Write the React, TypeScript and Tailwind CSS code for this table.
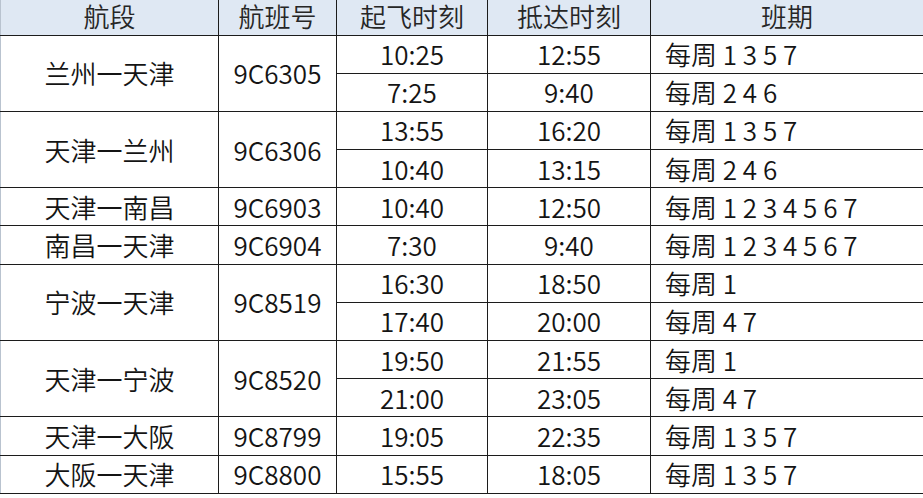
type Flight = {
  route: string;
  no: string;
  legs: { dep: string; arr: string; days: string }[];
};

const flights: Flight[] = [
  {
    route: "兰州一天津",
    no: "9C6305",
    legs: [
      { dep: "10:25", arr: "12:55", days: "每周 1 3 5 7" },
      { dep: "7:25", arr: "9:40", days: "每周 2 4 6" },
    ],
  },
  {
    route: "天津一兰州",
    no: "9C6306",
    legs: [
      { dep: "13:55", arr: "16:20", days: "每周 1 3 5 7" },
      { dep: "10:40", arr: "13:15", days: "每周 2 4 6" },
    ],
  },
  {
    route: "天津一南昌",
    no: "9C6903",
    legs: [{ dep: "10:40", arr: "12:50", days: "每周 1 2 3 4 5 6 7" }],
  },
  {
    route: "南昌一天津",
    no: "9C6904",
    legs: [{ dep: "7:30", arr: "9:40", days: "每周 1 2 3 4 5 6 7" }],
  },
  {
    route: "宁波一天津",
    no: "9C8519",
    legs: [
      { dep: "16:30", arr: "18:50", days: "每周 1" },
      { dep: "17:40", arr: "20:00", days: "每周 4 7" },
    ],
  },
  {
    route: "天津一宁波",
    no: "9C8520",
    legs: [
      { dep: "19:50", arr: "21:55", days: "每周 1" },
      { dep: "21:00", arr: "23:05", days: "每周 4 7" },
    ],
  },
  {
    route: "天津一大阪",
    no: "9C8799",
    legs: [{ dep: "19:05", arr: "22:35", days: "每周 1 3 5 7" }],
  },
  {
    route: "大阪一天津",
    no: "9C8800",
    legs: [{ dep: "15:55", arr: "18:05", days: "每周 1 3 5 7" }],
  },
];

const cell = "border-[1.5px] border-[#1c1c1c] p-0 text-center align-middle";
const head = `${cell} font-[350] leading-[28px] border-t-0 pb-[3px]`;

export default function App() {
  return (
    <div className="w-[923px] h-[498px] bg-white overflow-hidden font-['Noto_Sans_CJK_SC','Noto_Sans',sans-serif] font-[350] text-[26px] leading-[32px] text-[#141414]">
      <table className="w-[923px] table-fixed border-collapse">
        <colgroup>
          <col className="w-[218px]" />
          <col className="w-[118px]" />
          <col className="w-[151px]" />
          <col className="w-[163px]" />
          <col className="w-[273px]" />
        </colgroup>
        <thead>
          <tr className="h-[35px] bg-[#dfe8f3] text-[#262626]">
            <th className={`${head} border-l-[#b9c3cf]`}>航段</th>
            <th className={head}>航班号</th>
            <th className={head}>起飞时刻</th>
            <th className={head}>抵达时刻</th>
            <th className={head}>班期</th>
          </tr>
        </thead>
        <tbody>
          {flights.map((f) =>
            f.legs.map((leg, i) => (
              <tr key={f.no + i} className="h-[38.2px]">
                {i === 0 && (
                  <>
                    <td rowSpan={f.legs.length} className={`${cell} border-l-[#b9c3cf]`}>
                      {f.route}
                    </td>
                    <td rowSpan={f.legs.length} className={cell}>
                      {f.no}
                    </td>
                  </>
                )}
                <td className={cell}>{leg.dep}</td>
                <td className={cell}>{leg.arr}</td>
                <td className={`${cell} text-left pl-[14px] whitespace-pre`}>{leg.days}</td>
              </tr>
            ))
          )}
        </tbody>
      </table>
    </div>
  );
}
